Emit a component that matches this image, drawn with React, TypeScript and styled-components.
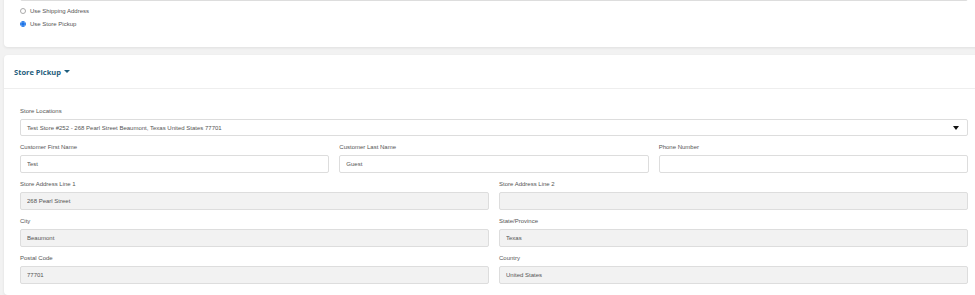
import React from 'react';
import styled, { createGlobalStyle } from 'styled-components';

const GlobalStyle = createGlobalStyle`
    html, body {
        margin: 0;
        padding: 0;
        background: #f2f2f2;
        overflow: hidden;
    }
    * {
        box-sizing: border-box;
    }
`;

interface FieldProps {
    label: string;
    value?: string;
    readOnly?: boolean;
}

const Field = ({ label, value = '', readOnly }: FieldProps) => (
    <FieldBox>
        <Label>{label}</Label>
        <TextInput value={value} readOnly $disabled={readOnly} onChange={() => {}} />
    </FieldBox>
);

export default function App() {
    return (
        <Page>
            <GlobalStyle />
            <DeliveryCard>
                <PrevInput />
                <RadioList>
                    <RadioRow>
                        <Radio type='radio' name='delivery' readOnly />
                        Use Shipping Address
                    </RadioRow>
                    <RadioRow>
                        <Radio type='radio' name='delivery' checked readOnly />
                        Use Store Pickup
                    </RadioRow>
                </RadioList>
            </DeliveryCard>

            <PickupCard>
                <Header>
                    <Title>Store Pickup</Title>
                    <Caret />
                </Header>

                <Body>
                    <FieldBox>
                        <Label>Store Locations</Label>
                        <Select>
                            Test Store #252 - 268 Pearl Street Beaumont, Texas United States 77701
                            <SelectCaret />
                        </Select>
                    </FieldBox>

                    <Row $cols={3}>
                        <Field label='Customer First Name' value='Test' />
                        <Field label='Customer Last Name' value='Guest' />
                        <Field label='Phone Number' />
                    </Row>

                    <Row $cols={2}>
                        <Field label='Store Address Line 1' value='268 Pearl Street' readOnly />
                        <Field label='Store Address Line 2' readOnly />
                    </Row>

                    <Row $cols={2}>
                        <Field label='City' value='Beaumont' readOnly />
                        <Field label='State/Province' value='Texas' readOnly />
                    </Row>

                    <Row $cols={2}>
                        <Field label='Postal Code' value='77701' readOnly />
                        <Field label='Country' value='United States' readOnly />
                    </Row>
                </Body>
            </PickupCard>
        </Page>
    );
}

const Page = styled.div`
    padding-left: 4px;
    margin-top: -17px;
    display: flex;
    flex-direction: column;
    gap: 8px;
    font-family: "Liberation Sans", Arial, sans-serif;
    color: #555;
`;

const Card = styled.div`
    width: 980px;
    background: #fff;
    border-radius: 4px;
    box-shadow: 0 1px 3px rgba(0, 0, 0, 0.08);
`;

const DeliveryCard = styled(Card)`
    padding: 0 16px 19px;
`;

const PrevInput = styled.div`
    height: 18px;
    border: 1px solid #ddd;
    border-radius: 2px;
`;

const RadioList = styled.div`
    margin-top: 6px;
    display: flex;
    flex-direction: column;
    gap: 5px;
`;

const RadioRow = styled.label`
    display: flex;
    align-items: center;
    gap: 4px;
    height: 8px;
    font-size: 6px;
    color: #555;
`;

const Radio = styled.input`
    appearance: none;
    margin: 0;
    width: 6px;
    height: 6px;
    border-radius: 50%;
    border: 1px solid #aaa;
    background: #fff;

    &:checked {
        border: 1px solid #1a73e8;
        background: radial-gradient(circle, #1a73e8 55%, #fff 60%);
    }
`;

const PickupCard = styled(Card)`
    height: 240px;
`;

const Header = styled.div`
    height: 34px;
    padding-left: 10px;
    display: flex;
    align-items: center;
    gap: 3px;
    border-bottom: 1px solid #eee;
`;

const Title = styled.span`
    font-family: "Open Sans", "Liberation Sans", sans-serif;
    font-weight: 700;
    font-size: 7.5px;
    color: #1f5d7c;
`;

const Caret = styled.span`
    width: 0;
    height: 0;
    border-left: 3px solid transparent;
    border-right: 3px solid transparent;
    border-top: 3.5px solid #1f5d7c;
`;

const Body = styled.div`
    padding: 18px 16px 0;
    display: flex;
    flex-direction: column;
    gap: 7px;
`;

const Row = styled.div<{ $cols: number }>`
    display: grid;
    grid-template-columns: repeat(${p => p.$cols}, 1fr);
    column-gap: 10px;
`;

const FieldBox = styled.div`
    display: flex;
    flex-direction: column;
`;

const Label = styled.span`
    font-size: 6px;
    line-height: 8px;
    margin-bottom: 4px;
    color: #555;
`;

const TextInput = styled.input<{ $disabled?: boolean }>`
    height: 18px;
    width: 100%;
    padding: 0 6px;
    border: 1px solid #ddd;
    border-radius: 2px;
    background: ${p => (p.$disabled ? '#f2f2f2' : '#fff')};
    font-family: "Liberation Sans", Arial, sans-serif;
    font-size: 6px;
    color: #555;
    outline: none;
`;

const Select = styled.div`
    position: relative;
    height: 17px;
    padding: 0 6px;
    display: flex;
    align-items: center;
    border: 1px solid #ddd;
    border-radius: 2px;
    background: #fff;
    font-size: 6px;
    color: #555;
`;

const SelectCaret = styled.span`
    position: absolute;
    right: 8px;
    top: 6px;
    width: 0;
    height: 0;
    border-left: 3px solid transparent;
    border-right: 3px solid transparent;
    border-top: 4px solid #111;
`;
